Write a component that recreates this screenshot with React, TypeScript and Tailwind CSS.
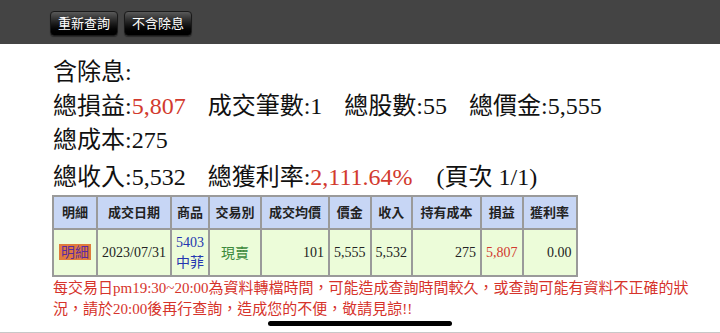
import React from "react";

const serif = "font-['Liberation_Serif','Noto_Sans_CJK_TC',serif]";
const sans = "font-['Liberation_Sans','Noto_Sans_CJK_TC',sans-serif]";

const cols = [
  { label: "明細", w: "w-[44px]" },
  { label: "成交日期", w: "w-[74px]" },
  { label: "商品", w: "w-[38px]" },
  { label: "交易別", w: "w-[52px]" },
  { label: "成交均價", w: "w-[68px]" },
  { label: "價金", w: "w-[39px]" },
  { label: "收入", w: "w-[41px]" },
  { label: "持有成本", w: "w-[69px]" },
  { label: "損益", w: "w-[37px]" },
  { label: "獲利率", w: "w-[54px]" },
];

const TopButton = ({ children }: { children: React.ReactNode }) => (
  <button className="h-[25px] px-[7px] rounded-[4px] border border-[#1a1a1a] bg-gradient-to-b from-[#5a5a5a] via-[#1c1c1c] to-black text-white text-[13px] leading-[23px] shadow-[0_1px_1px_rgba(0,0,0,0.4)]">
    {children}
  </button>
);

const App = () => {
  const td = "border border-[#9a9a9a] px-[4px]";
  return (
    <div className={`relative h-[333px] w-[720px] overflow-hidden bg-white ${serif}`}>
      <header className="flex h-[44px] items-center gap-[6px] bg-[#444444] pl-[50px] pt-[2px]">
        <TopButton>重新查詢</TopButton>
        <TopButton>不含除息</TopButton>
      </header>

      <main className="pl-[53px] pt-[11px] text-[24px] text-[#111]">
        <div className="h-[34px] leading-[34px]">含除息:</div>
        <div className="flex h-[34px] items-center leading-[34px] whitespace-nowrap">
          <span>
            總損益:<span className="text-[#d23a2e]">5,807</span>
          </span>
          <span className="ml-[22px]">成交筆數:1</span>
          <span className="ml-[22px]">總股數:55</span>
          <span className="ml-[22px]">總價金:5,555</span>
        </div>
        <div className="h-[34px] leading-[34px]">總成本:275</div>
        <div className="mt-[3px] flex h-[34px] items-center leading-[34px] whitespace-nowrap">
          <span>總收入:5,532</span>
          <span className="ml-[22px]">
            總獲利率:<span className="text-[#d23a2e]">2,111.64%</span>
          </span>
          <span className="ml-[24px]">(頁次 1/1)</span>
        </div>

        <table className="mt-[1px] -ml-[1px] border-separate border-spacing-0 border border-[#9a9a9a] text-[14px]">
          <thead>
            <tr className="h-[33px] bg-[#c7d6f5]">
              {cols.map((c) => (
                <th
                  key={c.label}
                  className={`${td} ${c.w} ${sans} text-center text-[13px] font-bold text-[#222] whitespace-nowrap`}
                >
                  {c.label}
                </th>
              ))}
            </tr>
          </thead>
          <tbody>
            <tr className="h-[47px] bg-[#ecfcd9] text-[#222] leading-[20px]">
              <td className={`${td} text-center`}>
                <span className={`inline-block bg-[#e07b3c] px-[2px] leading-[16px] text-[#5b2aa0] ${sans}`}>明細</span>
              </td>
              <td className={`${td} text-center whitespace-nowrap`}>2023/07/31</td>
              <td className={`${td} text-center text-[#2436b0]`}>
                <div className="leading-[18px]">5403</div>
                <div className={`leading-[20px] ${sans}`}>中菲</div>
              </td>
              <td className={`${td} text-center text-[#3b8a3b] ${sans}`}>現賣</td>
              <td className={`${td} text-right`}>101</td>
              <td className={`${td} text-right`}>5,555</td>
              <td className={`${td} text-right`}>5,532</td>
              <td className={`${td} text-right`}>275</td>
              <td className={`${td} text-right text-[#d23a2e]`}>5,807</td>
              <td className={`${td} text-right`}>0.00</td>
            </tr>
          </tbody>
        </table>

        <div className="mt-[1px] text-[15px] leading-[21px] text-[#d6332b] whitespace-nowrap">
          <div>每交易日pm19:30~20:00為資料轉檔時間，可能造成查詢時間較久，或查詢可能有資料不正確的狀</div>
          <div>況，請於20:00後再行查詢，造成您的不便，敬請見諒!!</div>
        </div>
      </main>

      <div className="absolute left-[268px] top-[321px] h-[5px] w-[184px] rounded-full bg-black" />
      <div className="absolute bottom-0 left-0 h-[1px] w-full bg-[#c8c8c8]" />
    </div>
  );
};

export default App;
